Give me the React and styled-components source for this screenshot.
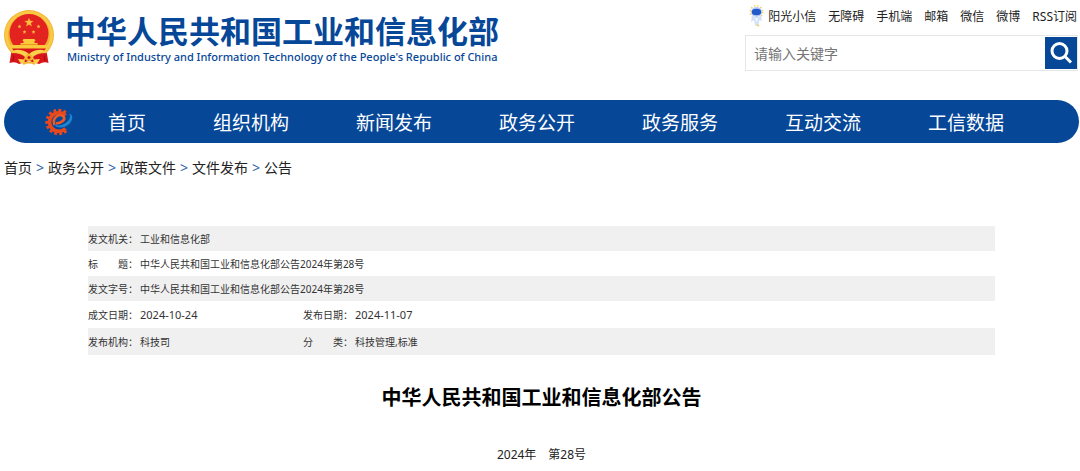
import styled, { createGlobalStyle } from 'styled-components';

const GlobalStyle = createGlobalStyle`
    * {
        box-sizing: border-box;
    }
    body {
        margin: 0;
        background-color: #fff;
        color: #000;
        font-family: "Noto Sans", "Noto Sans CJK SC", sans-serif;
    }
    a {
        color: inherit;
        text-decoration: none;
    }
`
const Page = styled.div`
    padding: 4px 1px 0 4px;
`
const Header = styled.header`
    display: flex;
    justify-content: space-between;
    height: 96px;
`
const Brand = styled.a`
    display: flex;
    align-items: flex-start;
    gap: 10px;
    padding-top: 6px;
    color: #064798;
`
const BrandText = styled.div`
    display: flex;
    flex-direction: column;
`
const BrandName = styled.span`
    font-size: 31px;
    font-weight: 700;
    line-height: 40px;
    white-space: nowrap;
    font-family: "Noto Sans CJK SC", sans-serif;
`
const BrandSub = styled.span`
    padding-left: 2px;
    font-size: 11px;
    font-weight: 500;
    line-height: 14px;
    white-space: nowrap;
`
const Tools = styled.div`
    display: flex;
    flex-direction: column;
    align-items: flex-end;
    gap: 7px;
    padding-right: 1px;
`
const QuickLinks = styled.nav`
    display: flex;
    align-items: center;
    gap: 12px;
    height: 24px;
    padding-right: 1px;
    font-size: 12px;
    color: #222;
    white-space: nowrap;
`
const Helper = styled.a`
    display: flex;
    align-items: center;
    gap: 4px;
`
const Search = styled.form`
    display: flex;
    align-items: center;
    width: 333px;
    height: 36px;
    border: 1px solid #e6e6e6;
`
const SearchInput = styled.input`
    flex: 1;
    min-width: 0;
    height: 32px;
    padding: 0 8px;
    border: none;
    outline: none;
    background: none;
    font-family: inherit;
    font-size: 14px;
    color: #333;
    &::placeholder {
        color: #757575;
    }
`
const SearchButton = styled.button`
    display: flex;
    align-items: center;
    justify-content: center;
    width: 32px;
    height: 32px;
    padding: 0;
    border: none;
    background-color: #064798;
    cursor: pointer;
`
const MainNav = styled.nav`
    display: flex;
    align-items: center;
    height: 43px;
    padding-left: 40px;
    border-radius: 22px;
    background-color: #064798;
    color: white;
`
const NavItems = styled.div`
    display: flex;
    gap: 67px;
    padding: 2px 0 0 35px;
    font-size: 19px;
    line-height: 42px;
    white-space: nowrap;
`
const Breadcrumb = styled.nav`
    display: flex;
    height: 83px;
    padding-top: 14px;
    font-size: 14px;
    line-height: 22px;
    color: #222;
`
const Crumb = styled.span`
    display: flex;
`
const Separator = styled.span`
    width: 16px;
    text-align: center;
    color: #2a63a8;
`
const Article = styled.main`
    padding: 0 84px;
`
const InfoTable = styled.table`
    width: 100%;
    border-collapse: collapse;
    table-layout: fixed;
    font-size: 10px;
    line-height: 16px;
    color: #333;
`
const InfoRow = styled.tr`
    height: ${props => props.$tall ? '27px' : '25px'};
    background-color: ${props => props.$shaded ? '#f0f0f0' : '#fff'};
`
const Label = styled.th`
    padding: 0;
    font-weight: 400;
    text-align: left;
    white-space: pre;
`
const Value = styled.td`
    padding: 0;
    font-size: ${props => props.$date ? '11px' : '10px'};
`
const Title = styled.h1`
    margin: 27px 0 0;
    font-size: 20px;
    font-weight: 700;
    line-height: 32px;
    text-align: center;
`
const Issue = styled.p`
    margin: 32px 0 0;
    font-size: 12px;
    line-height: 18px;
    text-align: center;
    color: #222;
`

const star = (cx, cy, r) =>
  Array.from({ length: 10 }, (_, i) => {
    const d = i % 2 ? r * 0.42 : r
    const a = (Math.PI / 5) * i - Math.PI / 2
    return `${(cx + d * Math.cos(a)).toFixed(2)},${(cy + d * Math.sin(a)).toFixed(2)}`
  }).join(' ')

const Emblem = () => (
  <svg width="51" height="56" viewBox="0 0 51 56" aria-hidden="true">
    <path d="M8 38 L5.500 53 Q11 51 15 54 L25 51 L35 54 Q40 51 44.500 53 L42 38Z" fill="#d8151a" />
    <path d="M10 44 L9 51 M40 44 L41 51" stroke="#a80d12" strokeWidth="1.200" />
    <circle cx="25" cy="25" r="25" fill="#f0b433" />
    <circle cx="25" cy="25" r="22.600" fill="none" stroke="#f9c945" strokeWidth="3" />
    <circle cx="25" cy="23.500" r="19.500" fill="#e3231f" />
    <polygon points={star(25, 12.5, 4.8)} fill="#f8bd3c" />
    <polygon points={star(15.5, 16.5, 2.1)} fill="#f8bd3c" />
    <polygon points={star(34.5, 16.5, 2.1)} fill="#f8bd3c" />
    <polygon points={star(20.5, 22, 2.1)} fill="#f8bd3c" />
    <polygon points={star(29.5, 22, 2.1)} fill="#f8bd3c" />
    <path d="M19.500 29 H30.500 L31.500 31 H30.500 V33 H33.500 V35 H44 L42 39 H8 L6 35 H16.500 V33 H19.500 V31 H18.500Z" fill="#fbc93c" />
    <path d="M17 34.500 H33" stroke="#e8981f" strokeWidth="1" />
    <path d="M8 38.500 H42 L39 42 Q33 43 25 48 Q17 43 11 42Z" fill="#d8151a" />
    <path d="M11 40 Q19 39 25 44 Q31 39 39 40 L42 42 Q33 43 25 49 Q17 43 8 42Z" fill="#fbd04a" />
    <path d="M8 43 Q17 43 21 47 L19 51 Q11 49 8 43Z M42 43 Q33 43 29 47 L31 51 Q39 49 42 43Z" fill="#d8151a" />
    <circle cx="25" cy="47.500" r="3.500" fill="#f3b72f" />
    <circle cx="25" cy="47.500" r="1.500" fill="#d8151a" />
    <path d="M14 49 L21 49.500 L20 54 L16 52.500Z M36 49 L29 49.500 L30 54 L34 52.500Z" fill="#fbd04a" />
    <path d="M19 54 Q25 51 31 54" fill="none" stroke="#f3b72f" strokeWidth="2" />
  </svg>
)

const Mascot = () => (
  <svg width="15" height="22" viewBox="0 0 15 22" aria-hidden="true">
    <circle cx="7.500" cy="7" r="6.300" fill="none" stroke="#f7cf56" strokeWidth="1.400" strokeDasharray="1.400 1.900" />
    <path d="M3 11 Q7.500 13 12 11 L13 16 L10.500 15 L9.500 20 Q7.500 22 6 20 L5 15 L2 17Z" fill="#d3e0fa" />
    <path d="M6 13 L9 13 L8 18Z" fill="#f3f7ff" />
    <ellipse cx="7.500" cy="7" rx="5.500" ry="5" fill="#b6cdf8" />
    <ellipse cx="7.500" cy="7" rx="4.700" ry="3.300" fill="#2459c9" />
    <path d="M8 20 L10 21" stroke="#f7cf56" strokeWidth="1.500" />
  </svg>
)

const GearLogo = () => (
  <svg width="29" height="28" viewBox="0 0 29 28" aria-hidden="true">
    <path d="M22 22.500 A11.300 11.300 0 1 1 22 5.500" fill="none" stroke="#e8481c" strokeWidth="4" strokeDasharray="2.700 2.100" />
    <path d="M21.500 20.500 A9.300 9.300 0 1 1 21.500 7.500" fill="none" stroke="#e8481c" strokeWidth="3.600" />
    <path d="M10.500 17 C7.500 9 16 5 19.500 8.500 C22 11.500 17.500 15 12 15.500" fill="none" stroke="#ee5a22" strokeWidth="2.600" />
    <path d="M24.500 5.500 C30 6 29 13 24.500 16.500 C19.500 20.500 12.500 20.500 10 16.500 C15.500 18.500 20.500 17 24 13 C26.500 10 27 7 24.500 5.500Z" fill="#1c86d1" />
  </svg>
)

const SearchIcon = () => (
  <svg width="24" height="24" viewBox="0 0 24 24" fill="none" stroke="#fff" strokeWidth="3" aria-hidden="true">
    <circle cx="10.500" cy="10" r="7.500" />
    <path d="M16 15.500 L22 21.500" />
  </svg>
)

const quickLinks = ['无障碍', '手机端', '邮箱', '微信', '微博', 'RSS订阅']
const navItems = ['首页', '组织机构', '新闻发布', '政务公开', '政务服务', '互动交流', '工信数据']
const crumbs = ['首页', '政务公开', '政策文件', '文件发布', '公告']
const rows = [
  { cells: [['发文机关：', '工业和信息化部']] },
  { cells: [['标　　题：', '中华人民共和国工业和信息化部公告2024年第28号']] },
  { cells: [['发文字号：', '中华人民共和国工业和信息化部公告2024年第28号']] },
  { date: true, tall: true, cells: [['成文日期：', '2024-10-24'], ['发布日期：', '2024-11-07']] },
  { tall: true, cells: [['发布机构：', '科技司'], ['分　　类：', '科技管理,标准']] },
]

const App = () => {
  return (
    <>
      <GlobalStyle />
      <Page lang="zh-CN">
        <Header>
          <Brand href="#">
            <Emblem />
            <BrandText>
              <BrandName>中华人民共和国工业和信息化部</BrandName>
              <BrandSub>Ministry of Industry and Information Technology of the People's Republic of China</BrandSub>
            </BrandText>
          </Brand>
          <Tools>
            <QuickLinks>
              <Helper href="#"><Mascot />阳光小信</Helper>
              {quickLinks.map(item => <a href="#" key={item}>{item}</a>)}
            </QuickLinks>
            <Search onSubmit={e => e.preventDefault()}>
              <SearchInput type="text" placeholder="请输入关键字" aria-label="请输入关键字" />
              <SearchButton type="submit" aria-label="搜索"><SearchIcon /></SearchButton>
            </Search>
          </Tools>
        </Header>
        <MainNav>
          <GearLogo />
          <NavItems>
            {navItems.map(item => <a href="#" key={item}>{item}</a>)}
          </NavItems>
        </MainNav>
        <Breadcrumb>
          {crumbs.map((item, i) => (
            <Crumb key={item}>
              {i > 0 && <Separator>&gt;</Separator>}
              <a href="#">{item}</a>
            </Crumb>
          ))}
        </Breadcrumb>
        <Article>
          <InfoTable>
            <colgroup>
              <col width="52" />
              <col width="163" />
              <col width="52" />
              <col />
            </colgroup>
            <tbody>
              {rows.map((row, i) => (
                <InfoRow key={i} $tall={row.tall} $shaded={i % 2 === 0}>
                  {row.cells.map(([label, value]) => [
                    <Label scope="row" key={label}>{label}</Label>,
                    <Value key={value} $date={row.date} colSpan={row.cells.length === 1 ? 3 : 1}>{value}</Value>,
                  ])}
                </InfoRow>
              ))}
            </tbody>
          </InfoTable>
          <Title>中华人民共和国工业和信息化部公告</Title>
          <Issue>2024年　第28号</Issue>
        </Article>
      </Page>
    </>
  )
}

export default App
